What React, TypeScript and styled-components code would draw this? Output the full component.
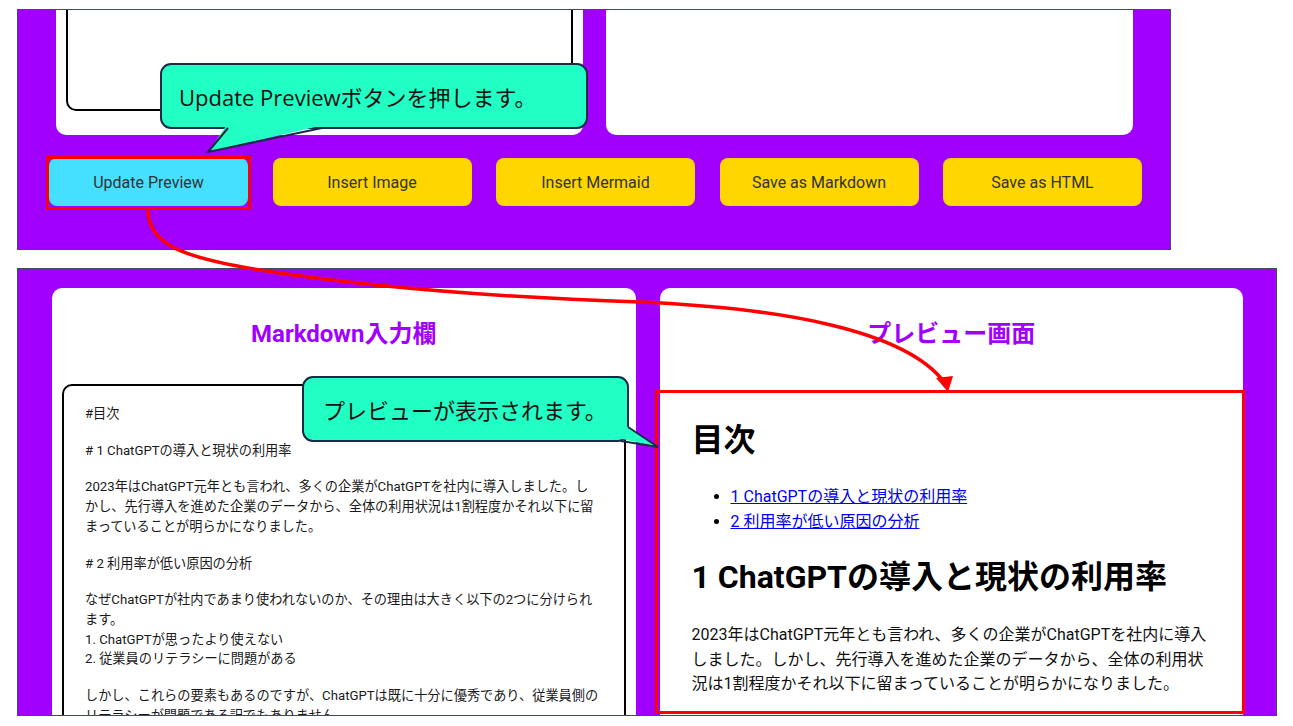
import React from "react";
import styled, { createGlobalStyle } from "styled-components";

const PURPLE = "#a100ff";
const FONT = `Roboto, "Noto Sans CJK JP", sans-serif`;
const CALLOUT_FONT = `"Open Sans", "Noto Sans CJK JP", sans-serif`;

const GlobalStyle = createGlobalStyle`
  html, body {
    margin: 0;
    padding: 0;
    background: #ffffff;
  }
  body {
    font-family: ${FONT};
  }
`;

const Page = styled.div`
  position: relative;
  width: 1293px;
  height: 726px;
  overflow: hidden;
  box-sizing: border-box;
  padding: 9px 0 0 17px;
  display: flex;
  flex-direction: column;
  gap: 18px;
`;

const Shot = styled.section<{ $w: number; $h: number }>`
  width: ${(p) => p.$w}px;
  height: ${(p) => p.$h}px;
  box-sizing: border-box;
  border: 1px solid #3d4d5e;
  background: ${PURPLE};
  overflow: hidden;
  display: flex;
  flex-direction: column;
`;

/* ---------- top screenshot ---------- */

const EditorRow = styled.div`
  display: grid;
  grid-template-columns: 1fr 1fr;
  gap: 23px;
  padding: 0 37px 0 38px;
  height: 125px;
`;

const TopCard = styled.div`
  background: #fff;
  border-radius: 0 0 10px 10px;
  padding: 0 10px 24px;
  display: flex;
`;

const OldTextarea = styled.textarea`
  flex: 1;
  margin: 0;
  border: 2px solid #000;
  border-top: none;
  border-radius: 0 0 10px 10px;
  resize: both;
  outline: none;
  background: #fff;
`;

const ButtonRow = styled.div`
  display: flex;
  gap: 24.5px;
  padding: 23px 0 0 31px;
`;

const ActionButton = styled.button<{ $active?: boolean; $marked?: boolean }>`
  position: relative;
  width: 199px;
  height: 48px;
  border: none;
  border-radius: 8px;
  background: ${(p) => (p.$active ? "#45e0ff" : "#ffd600")};
  color: #333;
  font-family: ${FONT};
  font-size: 16px;
  cursor: pointer;

  ${(p) =>
    p.$marked &&
    `
    &::after {
      content: "";
      position: absolute;
      top: -2px;
      left: -3px;
      right: -3px;
      bottom: -4px;
      border: 3px solid #ff0000;
    }
  `}
`;

/* ---------- bottom screenshot ---------- */

const CardsRow = styled.div`
  display: grid;
  grid-template-columns: 1fr 1fr;
  gap: 24px;
  padding: 19px 33px 0 34px;
  flex: 1;
`;

const Card = styled.div`
  background: #fff;
  border-radius: 10px 10px 0 0;
  padding-top: 32px;
  display: flex;
  flex-direction: column;
`;

const CardTitle = styled.h2`
  margin: 0;
  font-family: ${FONT};
  font-size: 24px;
  font-weight: 700;
  line-height: 28px;
  color: ${PURPLE};
  text-align: center;
`;

const SourceBox = styled.div`
  flex: 1;
  margin: 36px 10px 0;
  border: 2px solid #000;
  border-radius: 10px;
  padding: 18px 20px 0 21px;
  font-family: ${FONT};
  font-size: 13.2px;
  line-height: 19.7px;
  color: #1a1a1a;
`;

const SourcePara = styled.p`
  margin: 0 0 17px;
`;

const Line = styled.span`
  display: block;
  white-space: nowrap;
`;

const PreviewBox = styled.div`
  margin: 42px -2px 0 -5px;
  height: 324px;
  box-sizing: border-box;
  border: 3px solid #ff0000;
  padding: 28px 30px 0 34px;
  overflow: hidden;
  font-family: ${FONT};
  color: #000;
`;

const PreviewHeading = styled.h1<{ $gap: number }>`
  margin: ${(p) => p.$gap}px 0 0;
  font-size: 32px;
  font-weight: 700;
  line-height: 38px;
`;

const TocList = styled.ul`
  margin: 25px 0 0;
  padding-left: 39px;
  font-size: 16px;
  line-height: 25px;
`;

const TocLink = styled.a`
  color: #0000ee;
  text-decoration: underline;
`;

const PreviewText = styled.p`
  margin: 27px 0 0;
  font-size: 16px;
  line-height: 24.5px;
  color: #111;
`;

/* ---------- annotations ---------- */

const Callout = styled.div<{ $x: number; $y: number; $w: number }>`
  position: absolute;
  left: ${(p) => p.$x}px;
  top: ${(p) => p.$y}px;
  width: ${(p) => p.$w}px;
  height: 66px;
  z-index: 5;
`;

const Bubble = styled.div<{ $pad: number }>`
  box-sizing: border-box;
  height: 100%;
  border: 2px solid #1b2a48;
  border-radius: 11px;
  background: #22ffc4;
  padding-left: ${(p) => p.$pad}px;
  display: flex;
  align-items: center;
  font-family: ${CALLOUT_FONT};
  font-size: 22px;
  color: #111;
  white-space: nowrap;
`;

const Tail = styled.svg`
  position: absolute;
  left: 0;
  top: 0;
  overflow: visible;
`;

const ArrowLayer = styled.svg`
  position: absolute;
  left: 0;
  top: 0;
  pointer-events: none;
  z-index: 6;
`;

const CALLOUT_FILL = "#22ffc4";
const CALLOUT_LINE = "#1b2a48";

const buttons = [
  "Update Preview",
  "Insert Image",
  "Insert Mermaid",
  "Save as Markdown",
  "Save as HTML",
];

const source: string[][] = [
  ["#目次"],
  ["# 1 ChatGPTの導入と現状の利用率"],
  [
    "2023年はChatGPT元年とも言われ、多くの企業がChatGPTを社内に導入しました。し",
    "かし、先行導入を進めた企業のデータから、全体の利用状況は1割程度かそれ以下に留",
    "まっていることが明らかになりました。",
  ],
  ["# 2 利用率が低い原因の分析"],
  [
    "なぜChatGPTが社内であまり使われないのか、その理由は大きく以下の2つに分けられ",
    "ます。",
    "1. ChatGPTが思ったより使えない",
    "2. 従業員のリテラシーに問題がある",
  ],
  [
    "しかし、これらの要素もあるのですが、ChatGPTは既に十分に優秀であり、従業員側の",
    "リテラシーが問題である訳でもありません",
  ],
];

const previewLines = [
  "2023年はChatGPT元年とも言われ、多くの企業がChatGPTを社内に導入",
  "しました。しかし、先行導入を進めた企業のデータから、全体の利用状",
  "況は1割程度かそれ以下に留まっていることが明らかになりました。",
];

export default function App() {
  return (
    <>
      <GlobalStyle />
      <Page>
        <Shot $w={1154} $h={241}>
          <EditorRow>
            <TopCard>
              <OldTextarea readOnly />
            </TopCard>
            <TopCard />
          </EditorRow>
          <ButtonRow>
            {buttons.map((label, i) => (
              <ActionButton key={label} $active={i === 0} $marked={i === 0}>
                {label}
              </ActionButton>
            ))}
          </ButtonRow>
        </Shot>

        <Shot $w={1260} $h={448}>
          <CardsRow>
            <Card>
              <CardTitle>Markdown入力欄</CardTitle>
              <SourceBox>
                {source.map((para, i) => (
                  <SourcePara key={i}>
                    {para.map((l) => (
                      <Line key={l}>{l}</Line>
                    ))}
                  </SourcePara>
                ))}
              </SourceBox>
            </Card>
            <Card>
              <CardTitle>プレビュー画面</CardTitle>
              <PreviewBox>
                <PreviewHeading $gap={0}>目次</PreviewHeading>
                <TocList>
                  <li>
                    <TocLink href="#s1">1 ChatGPTの導入と現状の利用率</TocLink>
                  </li>
                  <li>
                    <TocLink href="#s2">2 利用率が低い原因の分析</TocLink>
                  </li>
                </TocList>
                <PreviewHeading $gap={24}>1 ChatGPTの導入と現状の利用率</PreviewHeading>
                <PreviewText>
                  {previewLines.map((l) => (
                    <Line key={l}>{l}</Line>
                  ))}
                </PreviewText>
              </PreviewBox>
            </Card>
          </CardsRow>
        </Shot>

        <Callout $x={160} $y={63} $w={428}>
          <Bubble $pad={17}>Update Previewボタンを押します。</Bubble>
          <Tail width={428} height={96}>
            <polygon points="67,62 48,89 164,62" fill={CALLOUT_FILL} />
            <polyline
              points="68,65 48,89 162,65"
              fill="none"
              stroke={CALLOUT_LINE}
              strokeWidth={2}
            />
          </Tail>
        </Callout>

        <Callout $x={302} $y={376} $w={327}>
          <Bubble $pad={19}>プレビューが表示されます。</Bubble>
          <Tail width={327} height={80}>
            <polygon points="323,49 356,71 316,62" fill={CALLOUT_FILL} />
            <polyline
              points="326,51 356,71 319,65"
              fill="none"
              stroke={CALLOUT_LINE}
              strokeWidth={2}
            />
          </Tail>
        </Callout>

        <ArrowLayer width={1293} height={726} viewBox="0 0 1293 726">
          <path
            d="M148,210 C148,245 185,258 260,270 C380,289 520,298 640,302 C780,308 905,330 944,382"
            fill="none"
            stroke="#ff0000"
            strokeWidth={3.5}
            strokeLinecap="round"
          />
          <polygon points="948,392 936,378 953,376" fill="#ff0000" />
        </ArrowLayer>
      </Page>
    </>
  );
}
